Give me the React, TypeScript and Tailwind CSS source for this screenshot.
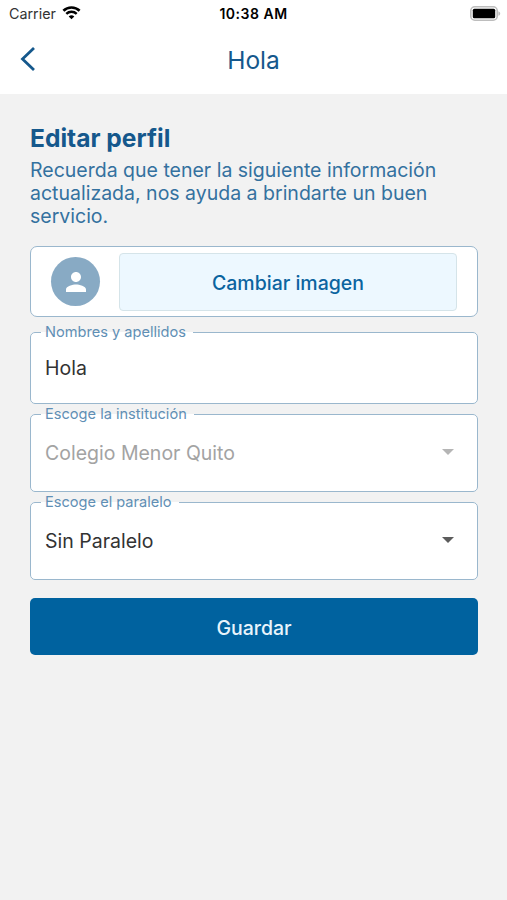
import React from 'react';
import { clsx } from 'clsx';

function StatusBar() {
  return (
    <div className="grid h-7 grid-cols-3 items-center bg-white pr-1.5 pb-0.5 pl-[9px] text-black">
      <div className="flex items-center gap-1.5">
        <span className="pt-0.5 text-[14.3px] text-[#333]">Carrier</span>
        <svg width="19" height="14" viewBox="0 0 19 14" fill="none" stroke="#000">
          <path d="M1.4 4.8a11.6 11.6 0 0 1 16.2 0" strokeWidth="2.6" />
          <path d="M4.3 7.9a7.4 7.4 0 0 1 10.4 0" strokeWidth="2.4" />
          <path d="M9.5 13.3 6.7 10.5a4 4 0 0 1 5.6 0Z" fill="#000" stroke="none" />
        </svg>
      </div>
      <span className="pr-[3px] text-center text-[14px] font-semibold tracking-[0.5px]">10:38 AM</span>
      <div className="flex justify-end">
        <svg width="31" height="15" viewBox="0 0 31 15">
          <rect x="0.8" y="0.8" width="26.4" height="13.4" rx="4" fill="#fff" stroke="#bdbdbd" strokeWidth="1.6" />
          <rect x="2.8" y="2.8" width="22.4" height="9.4" rx="1.5" fill="#000" />
          <path d="M28.4 5.2v4.6c1-.4 1.8-1.3 1.8-2.3s-.8-1.9-1.8-2.3Z" fill="#bdbdbd" />
        </svg>
      </div>
    </div>
  );
}

function Header() {
  return (
    <header className="grid h-[66px] grid-cols-3 items-center bg-white px-5 pb-[3px]">
      <button aria-label="Volver" className="w-fit pb-px">
        <svg width="16" height="26" viewBox="0 0 16 26" fill="none" stroke="#15588c" strokeWidth="2.8">
          <path d="M14 2 2.5 13 14 24" />
        </svg>
      </button>
      <h1 className="text-center text-[24.5px] leading-8 text-[#15588c]">Hola</h1>
    </header>
  );
}

type FieldProps = {
  label: string;
  value: string;
  select?: boolean;
  disabled?: boolean;
};

function Field({ label, value, select, disabled }: FieldProps) {
  return (
    <fieldset
      className={clsx(
        'rounded-[5px] border border-[#9ab7cd] bg-white pr-[23px] pl-2.5',
        select ? 'h-[86px]' : 'h-20'
      )}
    >
      <legend className="h-[17px] pr-[7px] pl-1 text-[14.6px] leading-[17px] text-[#5f8fb5]">
        {label}
      </legend>
      <div
        className={clsx(
          'flex items-center justify-between pl-1 text-[19.5px] leading-7',
          select ? 'pt-4' : 'pt-[13px]',
          disabled ? 'text-[#a3a3a3]' : 'text-[#333]'
        )}
      >
        <span>{value}</span>
        {select && (
          <svg
            className="mb-0.5"
            width="12"
            height="6"
            viewBox="0 0 12 6"
            fill={disabled ? '#b5b5b5' : '#5c5c5c'}
          >
            <path d="M0 0h12L6 6Z" />
          </svg>
        )}
      </div>
    </fieldset>
  );
}

export default function App() {
  return (
    <div className="min-h-screen bg-[#f2f2f2] font-['Inter',sans-serif]">
      <StatusBar />
      <Header />
      <main className="pt-[29px] pr-[29px] pl-[30px]">
        <h2 className="text-[24.6px] leading-[30px] font-bold text-[#15588c]">Editar perfil</h2>
        <p className="mt-1.5 text-[19.5px] leading-[23px] text-[#34719f]">
          Recuerda que tener la siguiente información actualizada, nos ayuda a brindarte un buen servicio.
        </p>

        {/* Avatar */}
        <section className="mt-[18px] flex h-[71px] items-center gap-[19px] rounded-[7px] border border-[#9ab7cd] bg-white px-5">
          <div className="flex size-[49px] shrink-0 items-center justify-center rounded-full bg-[#88aac4]">
            <svg width="30" height="30" viewBox="0 0 24 24" fill="#fff">
              <path d="M12 12c2.21 0 4-1.79 4-4s-1.79-4-4-4-4 1.79-4 4 1.79 4 4 4zm0 2c-2.67 0-8 1.34-8 4v2h16v-2c0-2.66-5.33-4-8-4z" />
            </svg>
          </div>
          <button className="h-[58px] flex-1 rounded-[4px] border border-[#d5e4e9] bg-[#edf8ff] pt-0.5 text-[19.5px] leading-7 font-medium text-[#0b649f]">
            Cambiar imagen
          </button>
        </section>

        <form className="mt-[7px] flex flex-col gap-0.5">
          <Field label="Nombres y apellidos" value="Hola" />
          <Field label="Escoge la institución" value="Colegio Menor Quito" select disabled />
          <Field label="Escoge el paralelo" value="Sin Paralelo" select />
          <button
            type="button"
            className="mt-4 h-[57px] rounded-[5px] bg-[#00629f] pt-0.5 text-[19.5px] leading-7 font-medium text-[#e8f4fc]"
          >
            Guardar
          </button>
        </form>
      </main>
    </div>
  );
}
